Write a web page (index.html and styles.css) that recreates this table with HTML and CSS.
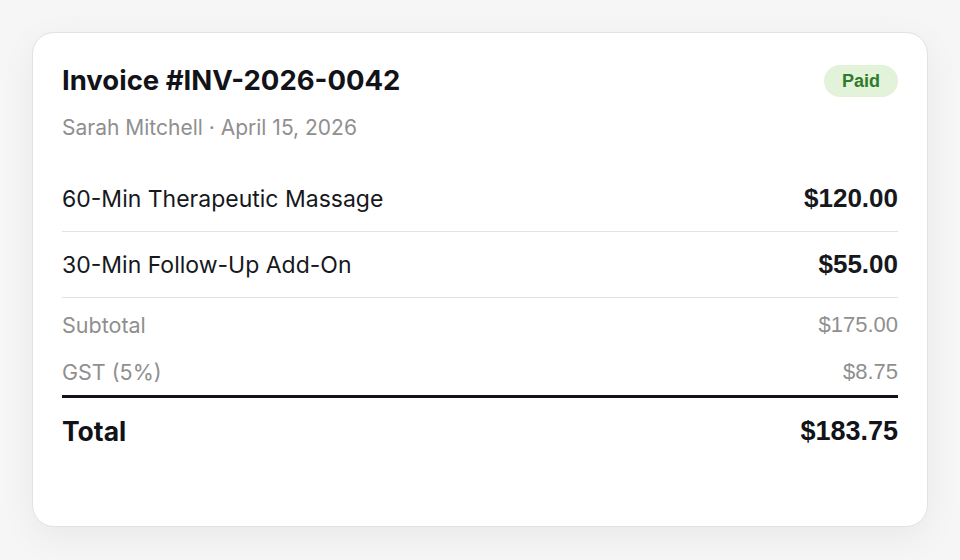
FILE: index.html
```html
<!DOCTYPE html>
<html lang="en">
<head>
<meta charset="utf-8">
<title>Invoice</title>
<link rel="stylesheet" href="styles.css">
</head>
<body>
<main class="card">
  <header class="head">
    <h1 class="title">Invoice #INV-2026-0042</h1>
    <span class="badge">Paid</span>
  </header>
  <p class="meta">Sarah Mitchell · April 15, 2026</p>
  <ul class="items">
    <li class="item"><span class="item-name">60-Min Therapeutic Massage</span><span class="item-amt">$120.00</span></li>
    <li class="item"><span class="item-name">30-Min Follow-Up Add-On</span><span class="item-amt">$55.00</span></li>
  </ul>
  <div class="summary">
    <div class="sum-row"><span>Subtotal</span><span class="num">$175.00</span></div>
    <div class="sum-row"><span>GST (5%)</span><span class="num">$8.75</span></div>
  </div>
  <div class="total">
    <span class="total-label">Total</span>
    <span class="total-amt">$183.75</span>
  </div>
</main>
</body>
</html>
```

FILE: styles.css
```css
* { box-sizing: border-box; }
html, body { margin: 0; }
body {
  background: #f6f6f6;
  padding: 32px;
  font-family: Inter, "Noto Sans", sans-serif;
  color: #111318;
}
.card {
  background: #fff;
  border: 1px solid #e2e2e2;
  border-radius: 22px;
  box-shadow: 0 10px 36px rgba(0,0,0,0.06);
  padding: 29px 29px 60px;
  height: 495px;
}
.head {
  display: flex;
  justify-content: space-between;
  align-items: center;
  height: 36px;
}
.title {
  margin: 0;
  font-size: 27.5px;
  line-height: 36px;
  font-weight: 700;
}
.badge {
  background: #e3f3da;
  color: #2f7a2b;
  font-family: "Liberation Sans", Arial, sans-serif;
  font-weight: 700;
  font-size: 18px;
  line-height: 32px;
  padding: 0 18px;
  border-radius: 16px;
  margin-top: 2px;
}
.meta {
  margin: 17px 0 0;
  font-size: 21px;
  line-height: 26px;
  color: #8f8f8f;
}
.items {
  list-style: none;
  margin: 25px 0 0;
  padding: 0;
}
.item {
  display: flex;
  justify-content: space-between;
  align-items: center;
  height: 66px;
  border-bottom: 1px solid #e3e3e3;
  font-size: 23px;
  color: #16181c;
}
.item-amt {
  font-family: "Liberation Sans", Arial, sans-serif;
  font-weight: 700;
  font-size: 26px;
}
.summary {
  padding-top: 3px;
}
.sum-row {
  display: flex;
  justify-content: space-between;
  align-items: center;
  height: 47px;
  font-size: 21.5px;
  color: #8f8f8f;
}
.sum-row .num {
  font-family: "Liberation Sans", Arial, sans-serif;
  font-size: 22px;
}
.total {
  border-top: 3px solid #111318;
  display: flex;
  justify-content: space-between;
  align-items: center;
  height: 69px;
}
.total-label {
  font-size: 26.5px;
  font-weight: 700;
}
.total-amt {
  font-family: "Liberation Sans", Arial, sans-serif;
  font-size: 27px;
  font-weight: 700;
}
```
